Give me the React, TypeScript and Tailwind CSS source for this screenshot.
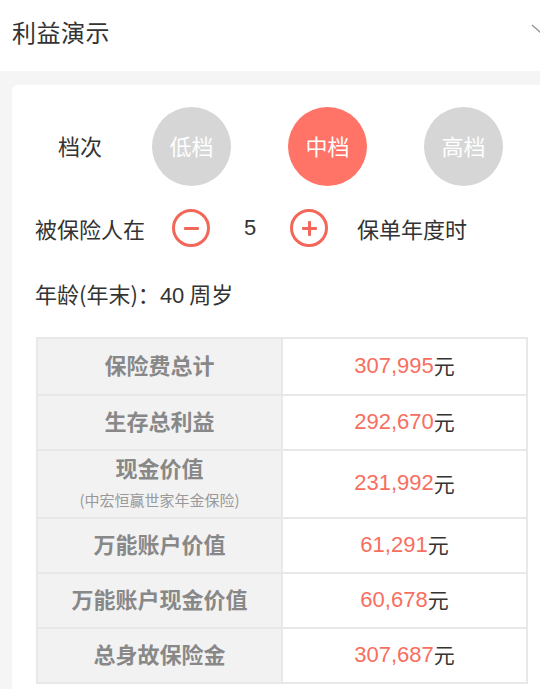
import React from 'react';

const rows: { label: string; sub?: string; value: string; tall?: boolean }[] = [
  { label: '保险费总计', value: '307,995' },
  { label: '生存总利益', value: '292,670' },
  { label: '现金价值', sub: '(中宏恒赢世家年金保险)', value: '231,992', tall: true },
  { label: '万能账户价值', value: '61,291' },
  { label: '万能账户现金价值', value: '60,678' },
  { label: '总身故保险金', value: '307,687' },
];

const levels = [
  { name: '低档', active: false },
  { name: '中档', active: true },
  { name: '高档', active: false },
];

const numFont = { fontFamily: '"Liberation Sans", "Noto Sans CJK SC", sans-serif' };

export default function App() {
  return (
    <div
      className="w-[540px] h-[689px] overflow-hidden bg-[#f5f5f5] text-[#333]"
      style={{ fontFamily: '"Noto Sans CJK SC", "Noto Sans", sans-serif' }}
    >
      {/* header */}
      <div className="relative h-[71px] bg-white flex items-center pl-[12px]">
        <span className="text-[24px] leading-none tracking-[0.5px] text-[#333] -mt-[8px]">利益演示</span>
        <svg className="absolute left-[531px] top-[24px]" width="20" height="12" viewBox="0 0 20 12">
          <path d="M1 1 L10 9 L19 1" fill="none" stroke="#9a9a9a" strokeWidth="1.5" />
        </svg>
      </div>

      {/* card */}
      <div className="ml-[12px] mt-[14px] bg-white rounded-tl-[6px] h-[620px]">
        {/* 档次 */}
        <div className="flex items-center pt-[22px] pl-[46px]">
          <span className="w-[44px] text-[22px] leading-none -mt-[4px]">档次</span>
          <div className="flex gap-[57px] ml-[50px]">
            {levels.map((l) => (
              <div
                key={l.name}
                className={`w-[79px] h-[79px] rounded-full flex items-center justify-center text-white text-[22px] leading-none ${
                  l.active ? 'bg-[#ff7466]' : 'bg-[#d6d6d6]'
                }`}
              >
                <span className="-mt-[3px]">{l.name}</span>
              </div>
            ))}
          </div>
        </div>

        {/* stepper */}
        <div className="flex items-center mt-[23px] pl-[23px] h-[38px]">
          <span className="text-[22px] leading-none w-[137px]">被保险人在</span>
          <div className="w-[38px] h-[38px] rounded-full border-[3px] border-[#f2675a] flex items-center justify-center">
            <div className="w-[15px] h-[3px] bg-[#f2675a] rounded-[1px]" />
          </div>
          <span className="w-[80px] text-center text-[22px] leading-none" style={numFont}>5</span>
          <div className="w-[38px] h-[38px] rounded-full border-[3px] border-[#f2675a] flex items-center justify-center relative">
            <div className="w-[15px] h-[3px] bg-[#f2675a] rounded-[1px]" />
            <div className="absolute w-[3px] h-[15px] bg-[#f2675a] rounded-[1px]" />
          </div>
          <span className="ml-[29px] text-[22px] leading-none">保单年度时</span>
        </div>

        {/* age */}
        <div className="mt-[35px] pl-[23px] text-[22px] leading-none">
          年龄(年末)：<span style={numFont}>40</span> 周岁
        </div>

        {/* table */}
        <div className="mt-[30px] ml-[24px] w-[492px] border-[2px] border-[#e8e8e8] grid grid-cols-[245px_1fr]">
          {rows.map((r, i) => (
            <React.Fragment key={r.label}>
              <div
                className={`bg-[#f2f2f2] flex flex-col items-center justify-center pb-[5px] border-r-[2px] border-[#e8e8e8] ${
                  i > 0 ? 'border-t-[2px]' : ''
                } ${r.tall ? 'h-[68px]' : 'h-[55px]'}`}
              >
                <span className="text-[22px] font-bold text-[#888] leading-none">{r.label}</span>
                {r.sub && <span className="text-[15px] text-[#999] leading-none mt-[14px]">{r.sub}</span>}
              </div>
              <div
                className={`flex items-center justify-center pb-[2px] border-[#e8e8e8] ${i > 0 ? 'border-t-[2px]' : ''} ${
                  r.tall ? 'h-[68px]' : 'h-[55px]'
                }`}
              >
                <span className="text-[22px] leading-none text-[#f86e60]" style={numFont}>{r.value}</span>
                <span className="text-[21px] leading-none text-[#333]">元</span>
              </div>
            </React.Fragment>
          ))}
        </div>
      </div>
    </div>
  );
}
